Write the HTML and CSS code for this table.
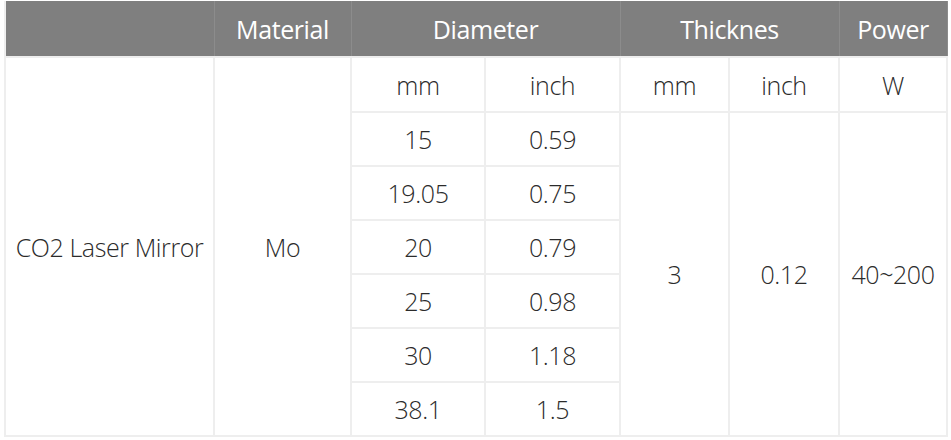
FILE: index.html
```html
<!DOCTYPE html>
<html>
<head>
<meta charset="utf-8">
<link rel="stylesheet" href="styles.css">
</head>
<body>
<table class="spec">
  <colgroup>
    <col class="c1"><col class="c2"><col class="c3"><col class="c4"><col class="c5"><col class="c6"><col class="c7">
  </colgroup>
  <thead>
    <tr class="head">
      <th></th>
      <th>Material</th>
      <th colspan="2">Diameter</th>
      <th colspan="2">Thicknes</th>
      <th>Power</th>
    </tr>
  </thead>
  <tbody>
    <tr class="sub">
      <td rowspan="7">CO2 Laser Mirror</td>
      <td rowspan="7">Mo</td>
      <td>mm</td><td>inch</td><td>mm</td><td>inch</td><td>W</td>
    </tr>
    <tr><td>15</td><td>0.59</td><td rowspan="6">3</td><td rowspan="6">0.12</td><td rowspan="6">40~200</td></tr>
    <tr><td>19.05</td><td>0.75</td></tr>
    <tr><td>20</td><td>0.79</td></tr>
    <tr><td>25</td><td>0.98</td></tr>
    <tr><td>30</td><td>1.18</td></tr>
    <tr><td>38.1</td><td>1.5</td></tr>
  </tbody>
</table>
</body>
</html>
```
FILE: styles.css
```css
html, body { margin: 0; padding: 0; background: #fff; }
body { padding: 1px 4px; }
.spec {
  border-collapse: collapse;
  table-layout: fixed;
  width: 942px;
  font-family: "Open Sans", "Noto Sans", sans-serif;
  color: #2b2b2b;
}
.c1 { width: 209px; }
.c2 { width: 137px; }
.c3 { width: 134px; }
.c4 { width: 135px; }
.c5 { width: 109px; }
.c6 { width: 110px; }
.c7 { width: 108px; }
.spec th {
  background: #7f7f7f;
  color: #fff;
  font-weight: 400;
  font-size: 25px;
  height: 55px;
  padding: 0;
  border: 1px solid #8c8c8c;
  border-top: none;
  letter-spacing: -0.4px;
}
.spec th:first-child { border-left: 2px solid #eee; }
.spec td {
  border: 2px solid #eeeeee;
  text-align: center;
  font-size: 25px;
  font-weight: 300;
  height: 52px;
  padding: 0;
  letter-spacing: -0.4px;
}
.spec .sub td { height: 53px; }
```
